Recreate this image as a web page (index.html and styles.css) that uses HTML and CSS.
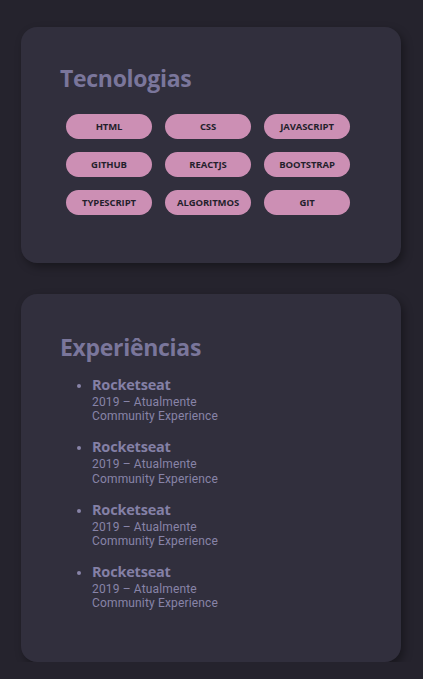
FILE: index.html
```html
<!DOCTYPE html>
<html lang="pt-BR">
<head>
<meta charset="utf-8">
<title>Portfólio</title>
<link rel="stylesheet" href="styles.css">
</head>
<body>
<main class="page">
  <section class="card card-tech">
    <h2 class="card-title">Tecnologias</h2>
    <ul class="chips">
      <li class="chip">HTML</li>
      <li class="chip">CSS</li>
      <li class="chip">JAVASCRIPT</li>
      <li class="chip">GITHUB</li>
      <li class="chip">REACTJS</li>
      <li class="chip">BOOTSTRAP</li>
      <li class="chip">TYPESCRIPT</li>
      <li class="chip">ALGORITMOS</li>
      <li class="chip">GIT</li>
    </ul>
  </section>
  <section class="card card-exp">
    <h2 class="card-title">Experiências</h2>
    <ul class="exp-list">
      <li class="exp"><strong class="exp-name">Rocketseat</strong><span class="exp-meta">2019 – Atualmente<br>Community Experience</span></li>
      <li class="exp"><strong class="exp-name">Rocketseat</strong><span class="exp-meta">2019 – Atualmente<br>Community Experience</span></li>
      <li class="exp"><strong class="exp-name">Rocketseat</strong><span class="exp-meta">2019 – Atualmente<br>Community Experience</span></li>
      <li class="exp"><strong class="exp-name">Rocketseat</strong><span class="exp-meta">2019 – Atualmente<br>Community Experience</span></li>
    </ul>
  </section>
</main>
</body>
</html>
```
FILE: styles.css
```css
* { box-sizing: border-box; }
html, body {
  margin: 0;
  background: #25232d;
  font-family: "Open Sans", "Noto Sans", sans-serif;
}
.page {
  width: 380px;
  margin-left: 21px;
  padding-top: 27px;
  display: flex;
  flex-direction: column;
  gap: 31px;
}
.card {
  background: #312f3d;
  border-radius: 16px;
  box-shadow: 3px 4px 8px rgba(0, 0, 0, 0.35);
  padding-left: 39px;
}
.card-tech { padding-top: 37px; padding-bottom: 48px; }
.card-exp { padding-top: 39px; padding-bottom: 51px; }
.card-title {
  margin: 0;
  font-size: 23px;
  line-height: 29px;
  font-weight: 700;
  color: #7a769b;
  letter-spacing: -0.3px;
}
.chips {
  list-style: none;
  margin: 21px 0 0 6px;
  padding: 0;
  display: grid;
  grid-template-columns: repeat(3, 86px);
  column-gap: 13px;
  row-gap: 13px;
}
.chip {
  height: 25px;
  border-radius: 13px;
  background: #cc8fb4;
  color: #241f2c;
  font-size: 9.5px;
  font-weight: 700;
  display: flex;
  align-items: center;
  justify-content: center;
  letter-spacing: -0.1px;
}
.exp-list {
  margin: 13px 0 0;
  padding-left: 32px;
  display: flex;
  flex-direction: column;
  gap: 14px;
  color: #8884a8;
}
.exp::marker { font-size: 12px; color: #8884a8; }
.exp-name {
  display: block;
  font-size: 14.5px;
  line-height: 20px;
  font-weight: 700;
  color: #8480a6;
  letter-spacing: -0.2px;
}
.exp-meta {
  display: block;
  font-family: Roboto, "Open Sans", sans-serif;
  font-size: 12px;
  line-height: 14.2px;
  color: #8884a8;
  letter-spacing: 0.15px;
}
```
